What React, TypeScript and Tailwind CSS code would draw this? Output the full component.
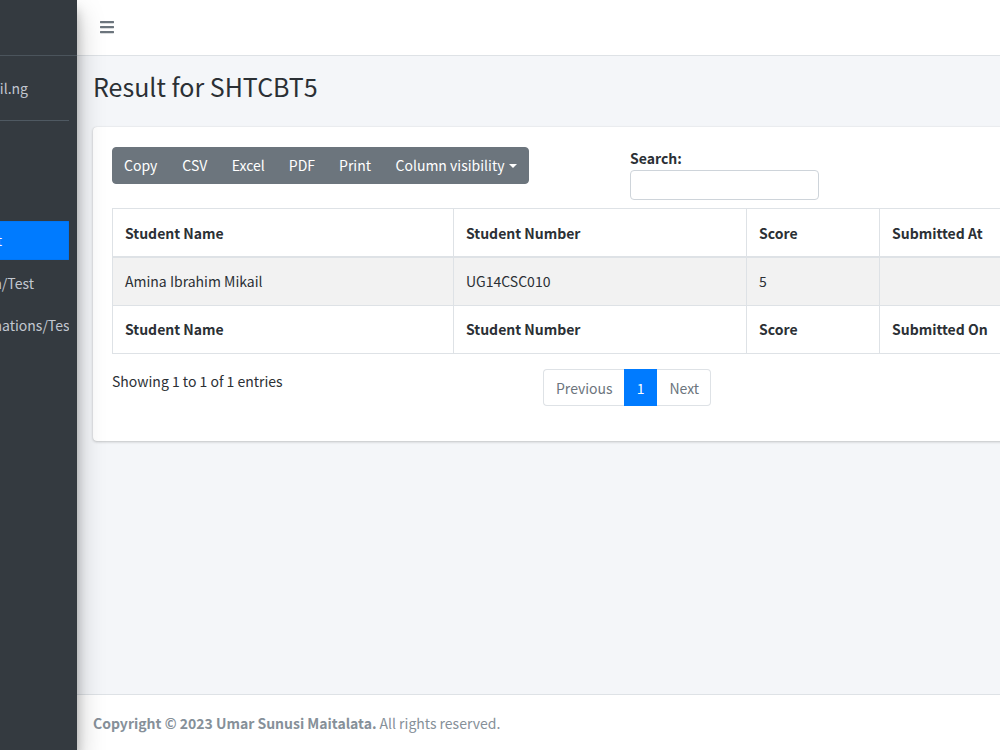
import React from "react";

const cols = ["w-[341px]", "w-[293px]", "w-[133px]", "w-[233px]"];

function HeadRow({ last, thick }: { last: string; thick?: boolean }) {
  const labels = ["Student Name", "Student Number", "Score", last];
  return (
    <tr>
      {labels.map((l) => (
        <th key={l} className={`h-[48px] border border-[#dee2e6] px-3 text-left align-middle font-bold text-[#2b3035] ${thick ? "border-b-2 pt-[2px]" : ""}`}>
          {l}
        </th>
      ))}
    </tr>
  );
}

export default function App() {
  return (
    <div className="flex h-[750px] w-[1000px] overflow-hidden bg-[#f4f6f9] font-['Noto_Sans_CJK_JP',sans-serif] text-[14px] text-[#2b3035]">
      <aside className="relative z-10 w-[77px] shrink-0 overflow-hidden bg-[#343a40] shadow-[0_14px_28px_rgba(0,0,0,0.25),0_10px_10px_rgba(0,0,0,0.22)]">
        <div className="ml-[-173px] w-[250px]">
          <div className="h-[56px] border-b border-[#4b545c]" />
          <div className="mx-2 flex h-[65px] justify-end border-b border-[#4f5962] pr-[41px] pt-[20px] leading-[24px] text-[#c2c7d0]">
            <span className="block whitespace-nowrap">amina@mail.ng</span>
          </div>
          <nav className="mx-2 mt-[100px] overflow-hidden text-[#c2c7d0]">
            <div className="flex h-[39px] items-center justify-end bg-[#007bff] pr-[67px] text-white shadow-[inset_0_0_1px_rgba(0,0,0,0.4)]">
              Result
            </div>
            <div className="mt-[3px] flex h-[40px] items-center justify-end whitespace-nowrap pr-[35px]">New Exam/Test</div>
            <div className="mt-[2px] flex h-[40px] items-center justify-end whitespace-nowrap">
              <span className="mr-[-5.5px]">All Examinations/Test</span>
            </div>
          </nav>
        </div>
      </aside>

      <div className="flex min-w-0 flex-1 flex-col">
        <header className="flex h-[56px] shrink-0 items-center border-b border-[#dee2e6] bg-white pb-[2px] pl-[23px]">
          <svg width="14" height="16" viewBox="0 0 448 512" fill="#6c757d" aria-label="menu">
            <path d="M16 132h416c8.837 0 16-7.163 16-16V76c0-8.837-7.163-16-16-16H16C7.163 60 0 67.163 0 76v40c0 8.837 7.163 16 16 16zm0 160h416c8.837 0 16-7.163 16-16v-40c0-8.837-7.163-16-16-16H16c-8.837 0-16 7.163-16 16v40c0 8.837 7.163 16 16 16zm0 160h416c8.837 0 16-7.163 16-16v-40c0-8.837-7.163-16-16-16H16c-8.837 0-16 7.163-16 16v40c0 8.837 7.163 16 16 16z" />
          </svg>
        </header>

        <main className="min-h-0 flex-1 pl-4">
          <h1 className="mt-[11px] h-[38px] text-[25px] font-normal leading-[38px] text-[#2b3035]">Result for SHTCBT5</h1>
          <section className="mt-[22px] h-[314px] w-[1000px] rounded-[4px] bg-white px-[19px] pt-5 shadow-[0_0_1px_rgba(0,0,0,0.125),0_1px_3px_rgba(0,0,0,0.2)]">
            <div className="flex h-[61px] items-start">
              <div className="flex h-[37px] w-[417px] items-center whitespace-nowrap rounded-[4px] border border-[#6c757d] bg-[#6c757d] text-white">
                <span className="ml-[11px]">Copy</span>
                <span className="ml-[25px]">CSV</span>
                <span className="ml-[24.5px]">Excel</span>
                <span className="ml-[24px]">PDF</span>
                <span className="ml-[24px]">Print</span>
                <span className="ml-[24.5px]">Column visibility</span>
                <span className="ml-[4px] h-0 w-0 border-x-[4.5px] border-t-[4.5px] border-x-transparent border-t-white" />
              </div>
              <div className="ml-[101px]">
                <div className="h-[23px] font-bold leading-[22px]">Search:</div>
                <div className="h-[30px] w-[189px] rounded-[4px] border border-[#ced4da] bg-white" />
              </div>
            </div>
            <table className="w-[1000px] table-fixed border-collapse">
              <colgroup>
                {cols.map((c) => <col key={c} className={c} />)}
              </colgroup>
              <thead><HeadRow last="Submitted At" thick /></thead>
              <tbody>
                <tr className="bg-[#f2f2f2]">
                  <td className="h-[49px] border border-[#dee2e6] px-3">Amina Ibrahim Mikail</td>
                  <td className="border border-[#dee2e6] px-3">UG14CSC010</td>
                  <td className="border border-[#dee2e6] px-3">5</td>
                  <td className="border border-[#dee2e6] px-3" />
                </tr>
              </tbody>
              <tfoot><HeadRow last="Submitted On" /></tfoot>
            </table>
            <div className="mt-[15px] flex items-start">
              <div className="w-[431px] leading-[24px]">Showing 1 to 1 of 1 entries</div>
              <div className="flex h-[37px] items-stretch leading-[24px]">
                <span className="flex items-center rounded-l-[4px] border border-r-0 border-[#dee2e6] bg-white pl-3 pr-[11px] text-[#6c757d]">Previous</span>
                <span className="flex items-center bg-[#007bff] px-[13px] text-white">1</span>
                <span className="flex items-center rounded-r-[4px] border border-l-0 border-[#dee2e6] bg-white pl-3 pr-[11px] text-[#6c757d]">Next</span>
              </div>
            </div>
          </section>
        </main>

        <footer className="flex h-[56px] shrink-0 items-center border-t border-[#dee2e6] bg-white pl-4 pt-[1px] text-[#869099]">
          <strong className="font-bold">Copyright © 2023 Umar Sunusi Maitalata.</strong>
          <span className="ml-[3px]">All rights reserved.</span>
        </footer>
      </div>
    </div>
  );
}
